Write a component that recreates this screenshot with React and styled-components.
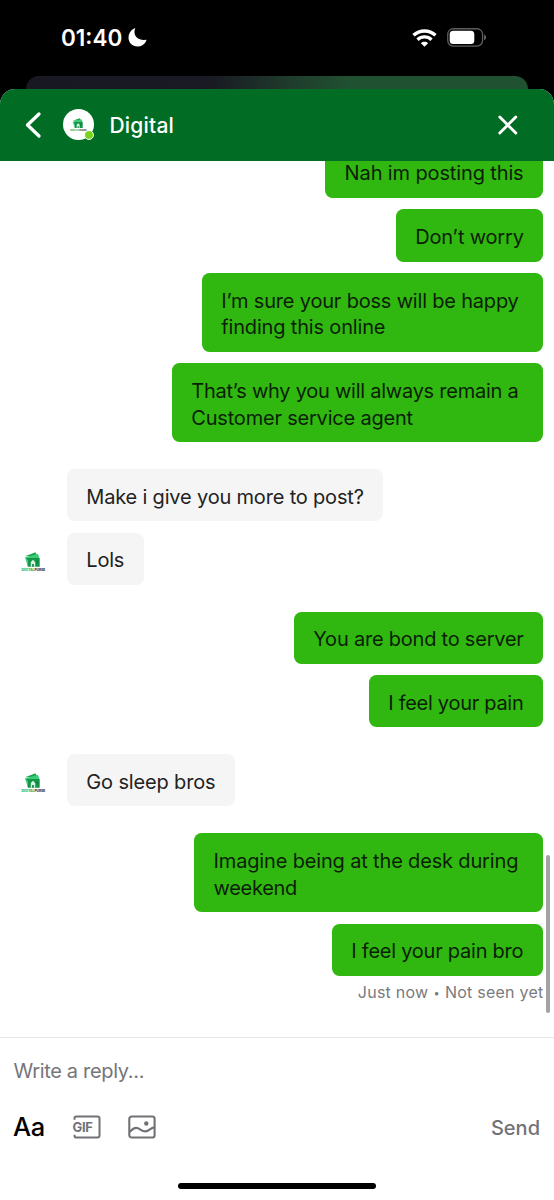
import React from "react";
import styled, { createGlobalStyle } from "styled-components";

const GlobalStyle = createGlobalStyle`
  * { box-sizing: border-box; }
  body { margin: 0; background: #000; font-family: Inter, "Liberation Sans", sans-serif; }
`;

const Screen = styled.div`
  width: 554px;
  height: 1200px;
  display: flex;
  flex-direction: column;
  background: #000;
  overflow: hidden;
`;

const StatusBar = styled.div`
  height: 76px;
  flex: none;
  display: flex;
  align-items: center;
  justify-content: space-between;
  padding: 0 67px 1px 61px;
  color: #fff;
`;

const StatusGroup = styled.div`
  display: flex;
  align-items: center;
  gap: ${(p) => p.$gap}px;
`;

const Clock = styled.span`
  font-size: 22.5px;
  line-height: 28px;
  font-weight: 570;
  letter-spacing: ${(p) => p.$track}px;
  padding-top: 1px;
`;

const BackSheet = styled.div`
  flex: none;
  height: 13px;
  margin: 0 26px;
  border-radius: 13px 13px 0 0;
  background: linear-gradient(90deg, #181822 0%, #191a23 37%, #1f3a2c 52%, #205231 65%, #205231 100%);
`;

const Sheet = styled.main`
  flex: 1;
  min-height: 0;
  display: flex;
  flex-direction: column;
  background: #fff;
  border-radius: 15px 15px 0 0;
  overflow: hidden;
`;

const Header = styled.header`
  height: 71.5px;
  flex: none;
  display: flex;
  align-items: center;
  padding: 0 36px 0 24px;
  background: #016d24;
  color: #fff;
`;

const IconButton = styled.button`
  display: flex;
  padding: 0;
  border: 0;
  background: none;
  color: ${(p) => p.$color || "inherit"};
`;

const HeaderAvatar = styled.div`
  position: relative;
  width: 31px;
  height: 31px;
  margin-left: 20px;
  border-radius: 50%;
  background: #fff;
  display: flex;
  align-items: center;
  justify-content: center;
`;

const OnlineDot = styled.span`
  position: absolute;
  right: 0;
  bottom: 0;
  width: 10px;
  height: 10px;
  border-radius: 50%;
  background: #7ad51a;
  border: 1px solid #fff;
`;

const Title = styled.h1`
  flex: 1;
  margin: 0 0 0 15.5px;
  padding-top: 2px;
  font-size: 21px;
  line-height: 28px;
  font-weight: 550;
  letter-spacing: ${(p) => p.$track}px;
`;

const Thread = styled.section`
  position: relative;
  flex: 1;
  min-height: 0;
  display: flex;
  flex-direction: column;
  justify-content: flex-end;
  gap: 26.7px;
  padding: 0 11px 34.2px 21px;
  overflow: hidden;
`;

const Group = styled.div`
  display: flex;
  align-items: flex-end;
  justify-content: ${(p) => (p.$mine ? "flex-end" : "flex-start")};
`;

const GroupAvatar = styled.div`
  width: 46px;
  flex: none;
  padding-bottom: 13px;
`;

const Stack = styled.div`
  display: flex;
  flex-direction: column;
  align-items: ${(p) => (p.$mine ? "flex-end" : "flex-start")};
  gap: 11.3px;
`;

const Bubble = styled.div`
  width: ${(p) => p.$width}px;
  padding: 14.75px 0 10.75px 19.3px;
  border-radius: 7.5px;
  background: ${(p) => (p.$mine ? "#30b810" : "#f5f5f5")};
  color: ${(p) => (p.$mine ? "#0b1e06" : "#222")};
  font-size: 20px;
  line-height: 26.8px;
  white-space: nowrap;
`;

const Line = styled.div`
  letter-spacing: ${(p) => p.$track}px;
`;

const Receipt = styled.div`
  height: 27.3px;
  margin: -11.3px -0.5px 0 0;
  padding-top: 4.7px;
  color: #7a7a7e;
  font-size: 16px;
  line-height: 22px;
  letter-spacing: 0.24px;
  white-space: nowrap;
`;

const Dot = styled.span`
  margin: 0 0.3px;
  font-size: 11px;
  line-height: 1;
  vertical-align: 1px;
`;

const ScrollThumb = styled.div`
  position: absolute;
  right: 4px;
  bottom: 24px;
  width: 4px;
  height: 158px;
  border-radius: 2px;
  background: #a3a3a3;
`;

const Composer = styled.footer`
  height: 162.7px;
  flex: none;
  display: flex;
  flex-direction: column;
  align-items: stretch;
  border-top: 1.5px solid #e6e6e6;
`;

const Placeholder = styled.div`
  padding: 19px 13.5px 0;
  color: #75757a;
  font-size: 20px;
  line-height: 28px;
  letter-spacing: ${(p) => p.$track}px;
`;

const Tools = styled.div`
  display: flex;
  align-items: center;
  height: 32px;
  margin-top: 26px;
  padding: 0 14px 0 13px;
`;

const FormatButton = styled(IconButton)`
  width: 59px;
  font: 500 25.5px/32px Inter, sans-serif;
  letter-spacing: -0.4px;
`;

const GifButton = styled(IconButton)`
  width: 55.5px;
`;

const SendButton = styled(IconButton)`
  margin-left: auto;
  padding-top: 1px;
  font: 500 20px/28px Inter, sans-serif;
`;

const HomeIndicator = styled.div`
  width: 198.5px;
  height: 6.5px;
  margin: 39.5px auto 0;
  border-radius: 4px;
  background: #000;
`;

const LogoSvg = styled.svg`
  display: block;
  overflow: visible;
`;

const Moon = () => (
  <svg width="19" height="19" viewBox="0 0 19 19">
    <path d="M7.2.6C4.7 5.7 8.4 13.3 17.6 11.8c.7-.1 1 .2.7.9C16.7 16.5 13.4 18.5 9.6 18.5 4.3 18.5.5 14.7.5 9.5.5 5.5 2.6 2.2 6.2.5c.7-.4 1.2-.3 1 .1z" fill="#fff" />
  </svg>
);

const Wifi = () => (
  <svg width="25" height="18" viewBox="0 0 25 18" fill="none" stroke="#fff">
    <path d="M1.5 6.3C7.7.5 17.3.5 23.5 6.3" strokeWidth="3.4" />
    <path d="M5.5 10.7c3.9-3.7 10.1-3.7 14 0" strokeWidth="3.3" />
    <path d="M8.9 14.2c2-1.9 5.2-1.9 7.2 0l-3.6 3.6z" fill="#fff" stroke="none" />
  </svg>
);

const Battery = () => (
  <svg width="40" height="19" viewBox="0 0 40 19">
    <rect x=".75" y=".75" width="34.8" height="17.3" rx="5.5" fill="none" stroke="#5e5e5e" strokeWidth="1.3" />
    <rect x="2.7" y="2.8" width="24.6" height="13.2" rx="3.5" fill="#fff" />
    <path d="M37.2 6.5c2.4 1 2.4 4.8 0 5.8z" fill="#6e6e6e" />
  </svg>
);

const Logo = ({ size }) => (
  <LogoSvg width={size} height={size * 0.8} viewBox="0 0 25 20">
    <path d="M4 4.2 14.5.3l1.6 3.9z" fill="#17a34c" />
    <path d="M3.8 5.4 16.8 1.8l1.7 4-12.5 2z" fill="#38cc78" />
    <path d="M5.2 6h13.500v8.7H7z" fill="#149447" />
    <path d="M4 5.6 7 14.7V8z" fill="#43cf80" />
    <path d="M9.8 14.7V10l2.2-2.2 2.2 2.2v4.7z" fill="#d8f5e3" />
    <path d="M11.2 14.7v-2.6h1.6v2.6zM15.4 9h2v1.5h-2z" fill="#087a36" />
    <text x=".4" y="19.2" fontSize="3.7" fontWeight="800" fontFamily="Inter, sans-serif" textLength="24" lengthAdjust="spacingAndGlyphs">
      <tspan fill="#18b253">DIGITAL</tspan><tspan fill="#333">PURSE</tspan>
    </text>
  </LogoSvg>
);

const BackIcon = () => (
  <svg width="19" height="28" viewBox="0 0 19 28" fill="none" stroke="#fff" strokeWidth="3.3" strokeLinecap="round" strokeLinejoin="round">
    <path d="M15 3 3.5 14 15 25" />
  </svg>
);

const CloseIcon = () => (
  <svg width="20" height="20" viewBox="0 0 20 20" fill="none" stroke="#fff" strokeWidth="2.9" strokeLinecap="round">
    <path d="m1.8 2 16 16M17.8 2 1.8 18" />
  </svg>
);

const GifIcon = () => (
  <svg width="30" height="24" viewBox="0 0 30 24">
    <path d="M2.5 4.8V3.3c0-1.2.7-1.8 1.8-1.8h21.2c1.2 0 2 .8 2 2v17c0 1.2-.8 2-2 2H4.3c-1.1 0-1.8-.6-1.8-1.8v-.9" fill="none" stroke="#727276" strokeWidth="2" />
    <text x=".4" y="17.3" fontFamily="Inter, sans-serif" fontSize="13" fontWeight="700" fill="#727276" textLength="20.5" lengthAdjust="spacing">GIF</text>
  </svg>
);

const ImageIcon = () => (
  <svg width="28" height="24" viewBox="0 0 28 24" fill="none" stroke="#727276" strokeWidth="2.1">
    <rect x="1.3" y="1.5" width="25.3" height="21" rx="2.3" />
    <path d="M1.5 17C4 14.5 6 12.9 8.2 12.9c3.5 0 5 3.5 9 3.5 4.2 0 5.3-4 9.4-4" />
    <circle cx="18.3" cy="8.5" r="2.2" fill="#727276" stroke="none" />
  </svg>
);

const threads = [
  {
    mine: true,
    messages: [
      { lines: [["Nah im posting this", -0.13]], width: 217.7 },
      { lines: [["Don’t worry", -0.18]], width: 147 },
      { lines: [["I’m sure your boss will be happy", -0.19], ["finding this online", -0.17]], width: 341 },
      { lines: [["That’s why you will always remain a", -0.25], ["Customer service agent", -0.2]], width: 371 },
    ],
  },
  {
    messages: [
      { lines: [["Make i give you more to post?", -0.18]], width: 316 },
      { lines: [["Lols", -0.2]], width: 77 },
    ],
  },
  {
    mine: true,
    messages: [
      { lines: [["You are bond to server", -0.22]], width: 249 },
      { lines: [["I feel your pain", -0.29]], width: 174 },
    ],
  },
  { messages: [{ lines: [["Go sleep bros", -0.15]], width: 168 }] },
  {
    mine: true,
    receipt: ["Just now", "Not seen yet"],
    messages: [
      { lines: [["Imagine being at the desk during", -0.16], ["weekend", -0.33]], width: 348.7 },
      { lines: [["I feel your pain bro", -0.24]], width: 211 },
    ],
  },
];

export default function App() {
  return (
    <Screen>
      <GlobalStyle />
      <StatusBar>
        <StatusGroup $gap={5.5}>
          <Clock $track={0}>01:40</Clock>
          <Moon />
        </StatusGroup>
        <StatusGroup $gap={10}>
          <Wifi />
          <Battery />
        </StatusGroup>
      </StatusBar>
      <BackSheet />
      <Sheet>
        <Header>
          <IconButton aria-label="Back"><BackIcon /></IconButton>
          <HeaderAvatar>
            <Logo size={17} />
            <OnlineDot />
          </HeaderAvatar>
          <Title $track={0.2}>Digital</Title>
          <IconButton aria-label="Close"><CloseIcon /></IconButton>
        </Header>
        <Thread>
          {threads.map((group, i) => (
            <Group key={i} $mine={group.mine}>
              {!group.mine && <GroupAvatar><Logo size={25} /></GroupAvatar>}
              <Stack $mine={group.mine}>
                {group.messages.map((m) => (
                  <Bubble key={m.lines[0][0]} $mine={group.mine} $width={m.width}>
                    {m.lines.map(([text, track]) => (
                      <Line key={text} $track={track}>{text}</Line>
                    ))}
                  </Bubble>
                ))}
                {group.receipt && (
                  <Receipt>{group.receipt[0]} <Dot>•</Dot> {group.receipt[1]}</Receipt>
                )}
              </Stack>
            </Group>
          ))}
          <ScrollThumb />
        </Thread>
        <Composer>
          <Placeholder $track={-0.33}>Write a reply...</Placeholder>
          <Tools>
            <FormatButton $color="#000">Aa</FormatButton>
            <GifButton aria-label="GIF"><GifIcon /></GifButton>
            <IconButton aria-label="Image"><ImageIcon /></IconButton>
            <SendButton $color="#727276">Send</SendButton>
          </Tools>
          <HomeIndicator />
        </Composer>
      </Sheet>
    </Screen>
  );
}
